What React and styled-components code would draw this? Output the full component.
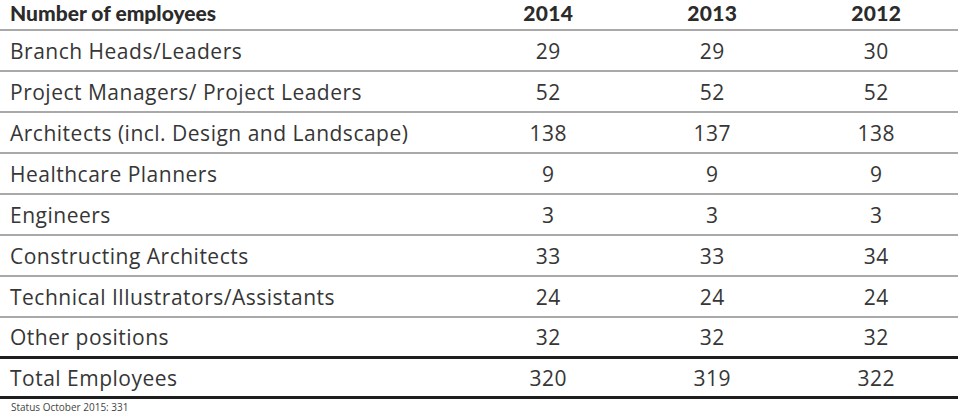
import React from "react";
import styled, { createGlobalStyle } from "styled-components";

const Global = createGlobalStyle`
  html, body { margin: 0; padding: 0; background: #ffffff; }
  body { font-family: "Open Sans", Lato, sans-serif; color: #353535; }
`;

const Table = styled.div`
  width: 958px;
  display: flex;
  flex-direction: column;
`;

const Row = styled.div`
  display: grid;
  grid-template-columns: 466px 164px 164px 164px;
  align-items: ${(p) => (p.$head ? "start" : "center")};
  height: ${(p) => p.$h}px;
  border-bottom: ${(p) => (p.$thick ? "3px solid #1e1e1e" : "2px solid #a9a9a9")};
  box-sizing: content-box;
`;

const Cell = styled.div`
  font-family: ${(p) => (p.$head ? "Lato, sans-serif" : "'Open Sans', sans-serif")};
  font-size: 21px;
  line-height: ${(p) => (p.$head ? "26px" : "28px")};
  font-weight: ${(p) => (p.$head ? 900 : 400)};
  letter-spacing: ${(p) => (p.$head ? "0.3px" : "0.5px")};
  color: ${(p) => (p.$head ? "#2b2b2b" : "#363636")};
  white-space: nowrap;
`;

const Label = styled(Cell)`
  padding-left: 10px;
  letter-spacing: ${(p) => (p.$head ? "0" : "0.5px")};
`;

const Num = styled(Cell)`
  text-align: center;
  padding-left: 0.5px;
`;

const Note = styled.div`
  padding: 2px 0 0 11px;
  font-family: "Open Sans", sans-serif;
  font-size: 10px;
  line-height: 12px;
  color: #444;
`;

const rows = [
  ["Branch Heads/Leaders", 29, 29, 30],
  ["Project Managers/ Project Leaders", 52, 52, 52],
  ["Architects (incl. Design and Landscape)", 138, 137, 138],
  ["Healthcare Planners", 9, 9, 9],
  ["Engineers", 3, 3, 3],
  ["Constructing Architects", 33, 33, 34],
  ["Technical Illustrators/Assistants", 24, 24, 24],
  ["Other positions", 32, 32, 32],
];

export default function App() {
  return (
    <>
      <Global />
      <Table>
        <Row $h={29} $head>
          <Label $head>Number of employees</Label>
          <Num $head>2014</Num>
          <Num $head>2013</Num>
          <Num $head>2012</Num>
        </Row>
        {rows.map((r, i) => {
          const last = i === rows.length - 1;
          return (
            <Row key={r[0]} $h={last ? 38 : 39} $thick={last}>
              <Label>{r[0]}</Label>
              <Num>{r[1]}</Num>
              <Num>{r[2]}</Num>
              <Num>{r[3]}</Num>
            </Row>
          );
        })}
        <Row $h={37} $thick>
          <Label>Total Employees</Label>
          <Num>320</Num>
          <Num>319</Num>
          <Num>322</Num>
        </Row>
      </Table>
      <Note>Status October 2015: 331</Note>
    </>
  );
}
